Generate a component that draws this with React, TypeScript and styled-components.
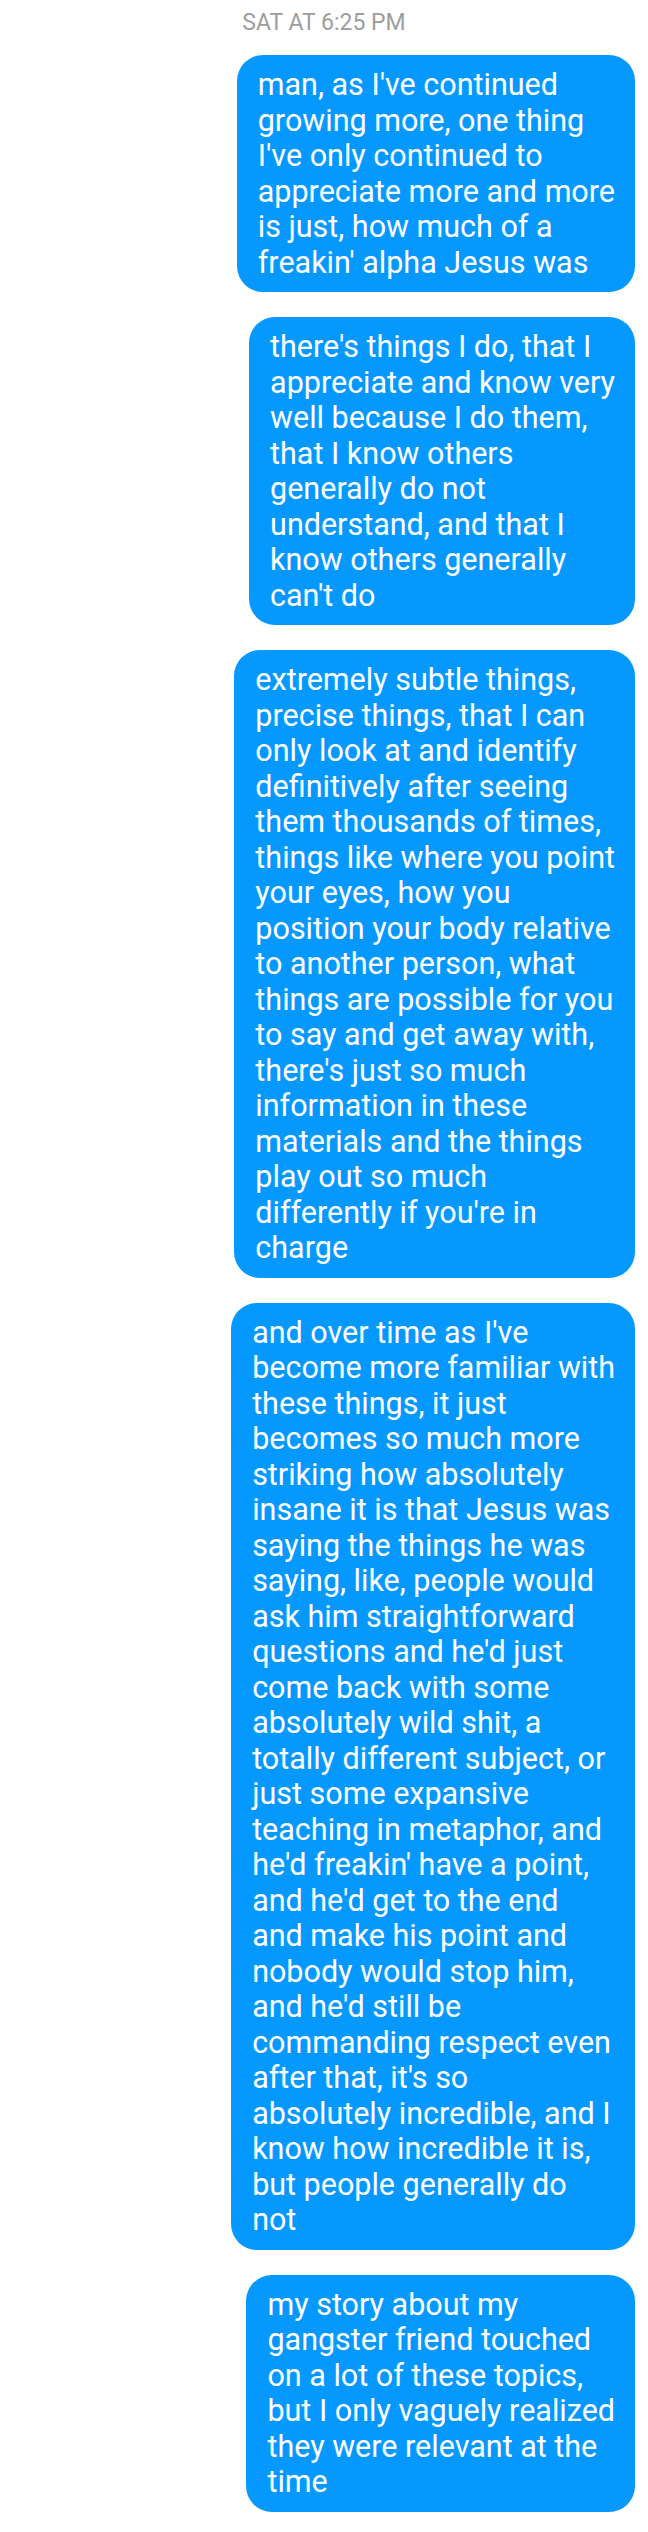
import React from "react";
import styled, { createGlobalStyle } from "styled-components";

const GlobalStyle = createGlobalStyle`
  html, body {
    margin: 0;
    padding: 0;
    background: #ffffff;
  }
  body {
    font-family: Roboto, "Noto Sans", "Liberation Sans", sans-serif;
    -webkit-font-smoothing: antialiased;
  }
`;

const Thread = styled.div`
  width: 648px;
  min-height: 2532px;
  box-sizing: border-box;
  padding: 10px 13px 20px 13px;
  display: flex;
  flex-direction: column;
  align-items: flex-end;
  gap: 25px;
  background: #ffffff;
`;

const Timestamp = styled.div`
  align-self: center;
  font-family: Roboto, "Liberation Sans", sans-serif;
  font-size: 23px;
  line-height: 26px;
  color: #9d9d9d;
  margin-bottom: -6px;
`;

const Bubble = styled.div`
  display: inline-flex;
  flex-direction: column;
  box-sizing: border-box;
  padding: 12px 20px 12px 21px;
  background: #0599ff;
  border-radius: 26px;
  color: #ffffff;
  font-family: Roboto, "Liberation Sans", sans-serif;
  font-size: 30.5px;
  line-height: 35.5px;
`;

const Line = styled.span`
  display: block;
  white-space: nowrap;
`;

const messages: string[][] = [
  [
    "man, as I've continued",
    "growing more, one thing",
    "I've only continued to",
    "appreciate more and more",
    "is just, how much of a",
    "freakin' alpha Jesus was",
  ],
  [
    "there's things I do, that I",
    "appreciate and know very",
    "well because I do them,",
    "that I know others",
    "generally do not",
    "understand, and that I",
    "know others generally",
    "can't do",
  ],
  [
    "extremely subtle things,",
    "precise things, that I can",
    "only look at and identify",
    "definitively after seeing",
    "them thousands of times,",
    "things like where you point",
    "your eyes, how you",
    "position your body relative",
    "to another person, what",
    "things are possible for you",
    "to say and get away with,",
    "there's just so much",
    "information in these",
    "materials and the things",
    "play out so much",
    "differently if you're in",
    "charge",
  ],
  [
    "and over time as I've",
    "become more familiar with",
    "these things, it just",
    "becomes so much more",
    "striking how absolutely",
    "insane it is that Jesus was",
    "saying the things he was",
    "saying, like, people would",
    "ask him straightforward",
    "questions and he'd just",
    "come back with some",
    "absolutely wild shit, a",
    "totally different subject, or",
    "just some expansive",
    "teaching in metaphor, and",
    "he'd freakin' have a point,",
    "and he'd get to the end",
    "and make his point and",
    "nobody would stop him,",
    "and he'd still be",
    "commanding respect even",
    "after that, it's so",
    "absolutely incredible, and I",
    "know how incredible it is,",
    "but people generally do",
    "not",
  ],
  [
    "my story about my",
    "gangster friend touched",
    "on a lot of these topics,",
    "but I only vaguely realized",
    "they were relevant at the",
    "time",
  ],
];

export default function App() {
  return (
    <>
      <GlobalStyle />
      <Thread>
        <Timestamp>SAT AT 6:25 PM</Timestamp>
        {messages.map((lines, i) => (
          <Bubble key={i}>
            {lines.map((l, j) => (
              <Line key={j}>{l}</Line>
            ))}
          </Bubble>
        ))}
      </Thread>
    </>
  );
}
